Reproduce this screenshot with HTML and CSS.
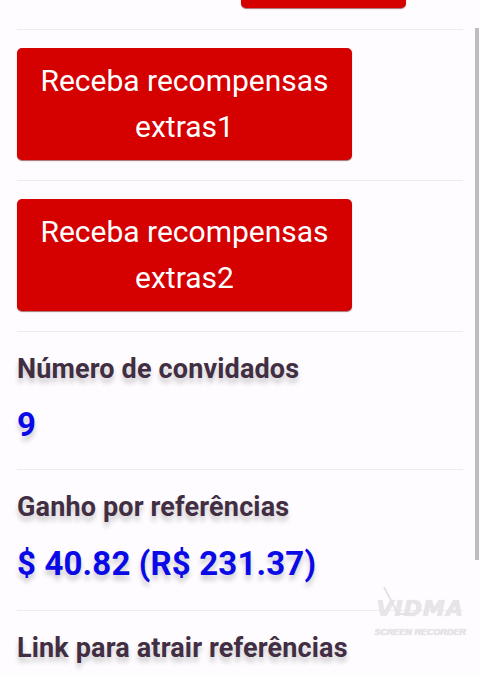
FILE: index.html
```html
<!DOCTYPE html>
<html lang="pt-BR">
<head>
<meta charset="utf-8">
<title>Referências</title>
<link rel="stylesheet" href="styles.css">
</head>
<body>
<main class="page">
  <section class="section section-top">
    <div class="top-btn-wrap"><div class="btn btn-top" aria-label="Convidar"></div></div>
  </section>
  <section class="section section-btn">
    <button class="btn">Receba recompensas extras1</button>
  </section>
  <section class="section section-btn">
    <button class="btn">Receba recompensas extras2</button>
  </section>
  <section class="section section-stat">
    <h2 class="label">Número de convidados</h2>
    <div class="value">9</div>
  </section>
  <section class="section section-stat">
    <h2 class="label">Ganho por referências</h2>
    <div class="value amount">$ 40.82 (R$ 231.37)</div>
  </section>
  <section class="section section-stat last">
    <h2 class="label">Link para atrair referências</h2>
  </section>
</main>
<div class="scrollbar"></div>
<div class="watermark">
  <svg class="wm-slash" width="30" height="34" viewBox="0 0 30 34"><path d="M2 1 L16 28 L30 28" fill="none" stroke="#e4e2e4" stroke-width="2"/></svg>
  <div class="wm-logo">VIDMA</div>
  <div class="wm-sub">SCREEN RECORDER</div>
</div>
</body>
</html>
```
FILE: styles.css
```css
html, body {
  margin: 0;
  padding: 0;
  background: #fefcfe;
  overflow: hidden;
  height: 676px;
}
body {
  font-family: Roboto, "Noto Sans", sans-serif;
  position: relative;
}
.page {
  margin: 0 17px;
}
.section {
  border-bottom: 1px solid #eeecee;
}
.section.last {
  border-bottom: none;
}
.section-top {
  padding-bottom: 21px;
}
.top-btn-wrap {
  display: flex;
  padding-left: 224px;
}
.btn {
  display: block;
  background: #d50000;
  color: #fff;
  border: none;
  border-radius: 5px;
  font-family: Roboto, sans-serif;
  font-size: 30px;
  line-height: 46px;
  font-weight: 400;
  padding: 10px 18px;
  width: 335px;
  text-align: center;
  box-shadow: 0 1px 1px rgba(90, 0, 0, 0.55);
}
.btn-top {
  width: 165px;
  height: 48px;
  padding: 0;
  margin-top: -40px;
}
.section-btn {
  padding: 18px 0 20px;
}
.section-stat {
  padding: 21px 0 25px;
}
.label {
  margin: 0;
  font-size: 27px;
  line-height: 32px;
  font-weight: 700;
  letter-spacing: 0.15px;
  color: #412e42;
  text-shadow: 0 5px 5px rgba(0, 0, 0, 0.2);
}
.value {
  margin-top: 21px;
  font-size: 33px;
  line-height: 38px;
  font-weight: 700;
  color: #0a0ae6;
  text-shadow: 0 5px 5px rgba(0, 0, 0, 0.2);
}
.amount {
  margin-top: 22px;
  letter-spacing: 0.15px;
  padding-bottom: 2px;
}
.scrollbar {
  position: absolute;
  left: 475px;
  top: 28px;
  width: 4px;
  height: 532px;
  background: #bdbdbd;
}
.watermark {
  position: absolute;
  left: 366px;
  top: 586px;
  width: 100px;
  height: 54px;
  color: #e7e5e7;
  font-style: italic;
  text-align: right;
  white-space: nowrap;
}
.wm-slash {
  position: absolute;
  left: 16px;
  top: 0;
}
.wm-logo {
  margin-top: 11px;
  font-family: "DejaVu Sans", sans-serif;
  font-weight: 700;
  font-size: 22px;
  line-height: 24px;
  letter-spacing: 1px;
  padding-right: 2px;
  text-shadow: 0 0 1px #d4d2d4;
}
.wm-sub {
  font-family: "Liberation Sans", sans-serif;
  font-weight: 700;
  font-size: 9px;
  line-height: 12px;
  margin-top: 5px;
  text-shadow: 0 0 1px #cccacc;
}
```
